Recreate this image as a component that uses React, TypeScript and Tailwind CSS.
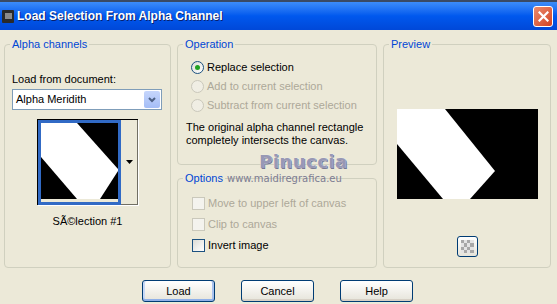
import type { ReactNode } from "react";

const FONT = { fontFamily: '"Liberation Sans", Arial, sans-serif' };

function Group({ label, className, children }: { label: string; className?: string; children?: ReactNode }) {
  return (
    <fieldset className={`rounded-[4px] border border-[#D0D0BF] ${className ?? ""}`}>
      <legend className="ml-[5px] px-[2px] text-[11px] leading-[13px] text-[#0046D5]">{label}</legend>
      {children}
    </fieldset>
  );
}

function Radio({ checked, disabled, label }: { checked?: boolean; disabled?: boolean; label: string }) {
  return (
    <div className="flex h-[19px] items-center">
      <span
        className={`flex h-[13px] w-[13px] items-center justify-center rounded-full border ${
          disabled ? "border-[#CAC8BB] bg-[#F0EEE4]" : "border-[#1C5180] bg-gradient-to-br from-[#DCDCD6] to-white"
        }`}
      >
        {checked && <span className="h-[5px] w-[5px] rounded-full bg-[#21A121]" />}
      </span>
      <span className={`ml-[3px] text-[11px] ${disabled ? "text-[#ACA899]" : "text-black"}`}>{label}</span>
    </div>
  );
}

function Check({ disabled, label }: { disabled?: boolean; label: string }) {
  return (
    <div className="flex h-[21px] items-center">
      <span
        className={`h-[13px] w-[13px] border ${
          disabled ? "border-[#CAC8BB] bg-[#F4F3EE]" : "border-[#1C5180] bg-gradient-to-br from-[#DCDCD6] to-white"
        }`}
      />
      <span className={`ml-[3px] text-[11px] ${disabled ? "text-[#ACA899]" : "text-black"}`}>{label}</span>
    </div>
  );
}

function XpButton({ label, isDefault }: { label: string; isDefault?: boolean }) {
  return (
    <button
      className={`h-[22px] w-[73px] rounded-[3px] border border-[#003C74] bg-gradient-to-b from-white to-[#E6E4DA] text-[11px] text-black ${
        isDefault ? "shadow-[inset_0_-2px_0_#8FB0E8,inset_2px_0_0_#C6D8F6,inset_-2px_0_0_#A9C2EE]" : "shadow-[inset_0_-2px_0_#D6D0C5]"
      }`}
    >
      {label}
    </button>
  );
}

function Shape({ w, h, points }: { w: number; h: number; points: string }) {
  return (
    <svg width={w} height={h} viewBox={`0 0 ${w} ${h}`} className="block">
      <rect width={w} height={h} fill="#000" />
      <polygon points={points} fill="#fff" />
    </svg>
  );
}

export default function App() {
  return (
    <div className="relative h-[304px] w-[557px] overflow-hidden bg-[#ECE9D8]" style={FONT}>
      <div className="h-[2px] bg-[#3a4a63]" />
      <div className="flex h-[28px] items-center bg-gradient-to-b from-[#3C8CF8] via-[#0058EE] to-[#0048D8] pr-[4px]">
        <div className="ml-[2px] flex h-[13px] w-[12px] items-center justify-center rounded-[1px] bg-[#2a2a2a]">
          <span className="h-[6px] w-[7px] bg-[#8a8a8a]" />
        </div>
        <span className="ml-[3px] text-[12px] font-bold text-white [text-shadow:1px_1px_0_#0a1f6b]">
          Load Selection From Alpha Channel
        </span>
        <span className="ml-auto flex h-[21px] w-[20px] items-center justify-center rounded-[3px] border border-white bg-gradient-to-br from-[#E98A6D] to-[#D2401E]">
          <svg width="11" height="11" viewBox="0 0 11 11">
            <path d="M1.5 1.5 L9.5 9.5 M9.5 1.5 L1.5 9.5" stroke="#fff" strokeWidth="2.2" strokeLinecap="square" />
          </svg>
        </span>
      </div>

      <div className="flex gap-[6px] pl-[4px] pt-[8px]">
        <Group label="Alpha channels" className="h-[230px] w-[167px]">
          <div className="px-[7px]">
            <div className="mt-[22px] text-[11px] leading-[13px] text-black">Load from document:</div>
            <div className="mt-[3px] flex h-[21px] w-[150px] items-center border border-[#7F9DB9] bg-white pl-[3px]">
              <span className="text-[11px] text-black">Alpha Meridith</span>
              <span className="ml-auto mr-[1px] flex h-[17px] w-[16px] items-center justify-center rounded-[2px] bg-gradient-to-b from-[#C6D6FC] to-[#A4BDF6]">
                <svg width="8" height="6" viewBox="0 0 8 6">
                  <path d="M1 1 L4 4 L7 1" stroke="#4D6185" strokeWidth="2" fill="none" />
                </svg>
              </span>
            </div>
            <div className="ml-[25px] mt-[9px] flex h-[86px] w-[101px] border-l border-t border-black bg-[#ECE9D8] shadow-[1px_1px_0_#fff]">
              <div className="border-[3px] border-[#316AC5]">
                <Shape w={77} h={76} points="0,0 36,0 77,46 77,48 59,76 36,76 0,34" />
              </div>
              <div className="flex flex-1 items-center justify-center border-b border-r border-[#716F64]">
                <svg width="7" height="4" viewBox="0 0 7 4">
                  <path d="M0 0 H7 L3.5 4 Z" fill="#000" />
                </svg>
              </div>
            </div>
            <div className="mt-[10px] text-center text-[11px] leading-[13px] text-black">SÃ©lection #1</div>
          </div>
        </Group>

        <div className="flex w-[200px] flex-col gap-[7px]">
          <Group label="Operation" className="h-[127px]">
            <div className="pl-[8px] pr-[6px]">
              <div className="ml-[5px] mt-[7px] flex flex-col">
                <Radio checked label="Replace selection" />
                <Radio disabled label="Add to current selection" />
                <Radio disabled label="Subtract from current selection" />
              </div>
              <p className="mt-[6px] text-[11px] leading-[13px] text-black">
                The original alpha channel rectangle completely intersects the canvas.
              </p>
            </div>
          </Group>
          <Group label="Options" className="h-[96px]">
            <div className="mt-[8px] flex flex-col pl-[14px]">
              <Check disabled label="Move to upper left of canvas" />
              <Check disabled label="Clip to canvas" />
              <Check label="Invert image" />
            </div>
          </Group>
        </div>

        <Group label="Preview" className="h-[230px] w-[168px]">
          <div className="flex flex-col items-center px-[12px]">
            <div className="mt-[58px]">
              <Shape w={141} h={90} points="0,0 48,0 98,62 73,90 46,90 0,35" />
            </div>
            <div className="mt-[37px] grid h-[21px] w-[21px] place-items-center rounded-[3px] border border-[#003C74] bg-gradient-to-b from-white to-[#E6E4DA]">
              <div className="grid h-[13px] w-[13px] grid-cols-4 grid-rows-4">
                {Array.from({ length: 16 }).map((_, i) => (
                  <span key={i} className={(Math.floor(i / 4) + i) % 2 === 0 ? "bg-[#A8A8A8]" : "bg-[#E4E4E4]"} />
                ))}
              </div>
            </div>
          </div>
        </Group>
      </div>

      <div className="mt-[12px] flex justify-center gap-[26px] pr-[2px]">
        <XpButton label="Load" isDefault />
        <XpButton label="Cancel" />
        <XpButton label="Help" />
      </div>

      <div
        className="pointer-events-none absolute left-[259px] top-[148px] text-[18px] font-bold tracking-[0.5px] text-[#9898B4] [text-shadow:0_0_1px_#fff,1px_1px_0_#6e6e8c]"
        style={{ fontFamily: '"DejaVu Sans", sans-serif' }}
      >
        Pinuccia
      </div>
      <div
        className="pointer-events-none absolute left-[227px] top-[171px] text-[10px] text-[#7C7C92]"
        style={{ fontFamily: '"DejaVu Sans", sans-serif' }}
      >
        www.maidiregrafica.eu
      </div>
    </div>
  );
}
